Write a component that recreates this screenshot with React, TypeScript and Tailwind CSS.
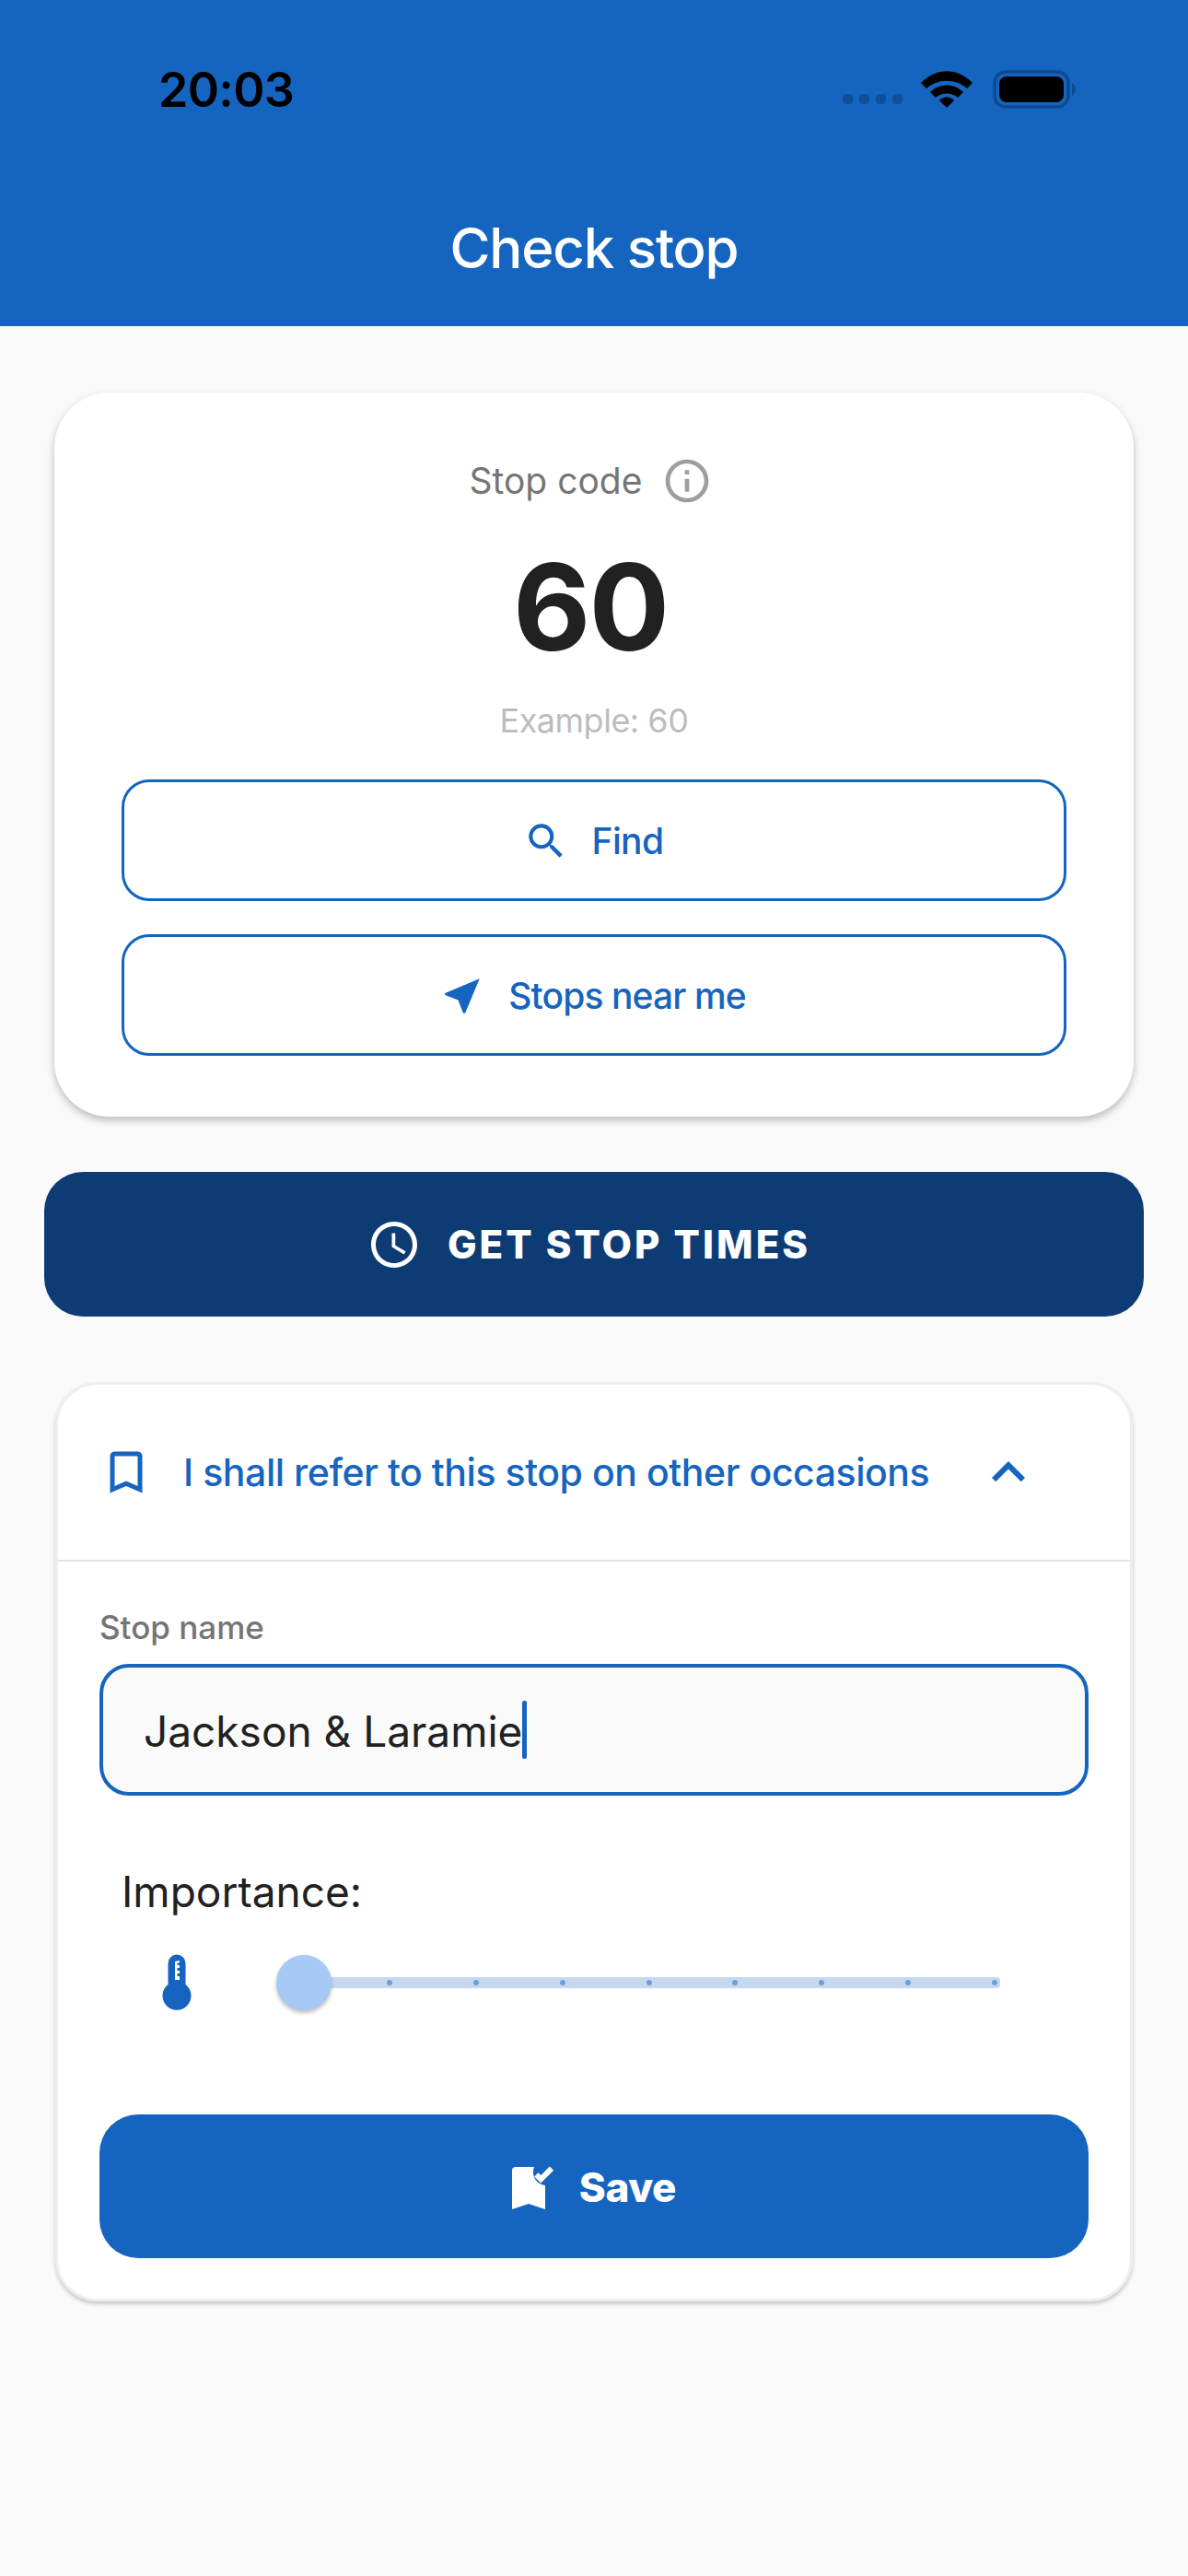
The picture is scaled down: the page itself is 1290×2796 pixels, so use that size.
import { MdSearch, MdNearMe, MdInfoOutline, MdAccessTime, MdBookmarkBorder, MdExpandLess } from "react-icons/md";

const font = { fontFamily: "Inter, 'Noto Sans', sans-serif" };

function Wifi() {
  return (
    <svg width="56" height="40" viewBox="0 0 56 40" className="block">
      <path d="M0 13 L6 19 C18 8 38 8 50 19 L56 13 C40 -4 16 -4 0 13 Z" fill="#000" />
      <path d="M10 23 L16 29 C22 23 34 23 40 29 L46 23 C36 13 20 13 10 23 Z" fill="#000" />
      <path d="M20 32 L28 40 L36 32 C31 27 25 27 20 32 Z" fill="#000" />
    </svg>
  );
}

function Battery() {
  return (
    <svg width="92" height="42" viewBox="0 0 92 42" className="block">
      <rect x="2" y="2" width="80" height="38" rx="12" fill="none" stroke="#0d4a8f" strokeWidth="3.5" />
      <rect x="7" y="7" width="70" height="28" rx="8" fill="#000" />
      <path d="M86 14 C91 16 91 26 86 28 Z" fill="#0d4a8f" />
    </svg>
  );
}

function Thermo() {
  return (
    <svg width="32" height="62" viewBox="0 0 32 62" className="block">
      <path fillRule="evenodd" fill="#1565c0" d="M6.5 10 A9.5 9.5 0 0 1 25.5 10 V33 A15.5 15.5 0 1 1 6.5 33 Z M14 8 V28 H19 V24 H16.5 V21 H19 V18 H16.5 V15 H19 V12 H16.5 V10 L19 9 V7 Z" />
    </svg>
  );
}

function SaveIcon() {
  return (
    <svg width="46" height="48" viewBox="0 0 46 48" className="block">
      <path fill="#fff" d="M4 2 H24 A14.5 14.5 0 0 0 36 22 V48 L18 42 L0 48 V6 A4 4 0 0 1 4 2 Z" />
      <path fill="none" stroke="#fff" strokeWidth="6" d="M26.3 10.3 L31.3 15.3 L43 3.7" />
    </svg>
  );
}

export default function App() {
  const ticks = [0, 1, 2, 3, 4, 5, 6, 7];
  return (
    <div style={font} className="min-h-[2796px] w-[1290px] bg-[#fafafa] flex flex-col">
      <header className="h-[354px] bg-[#1565c0] flex flex-col">
        <div className="h-[233px] pt-[70px] pl-[172px] pr-[120px] flex items-start justify-between">
          <span className="text-[52px] leading-[56px] font-semibold text-black tracking-[-0.7px]">20:03</span>
          <div className="flex items-center pt-[6px]">
            <div className="flex gap-[7px] mt-[20px] mr-[20px]">
              <span className="w-[11px] h-[11px] rounded-[4px] bg-[#0f4f9a]" />
              <span className="w-[11px] h-[11px] rounded-[4px] bg-[#0f4f9a]" />
              <span className="w-[11px] h-[11px] rounded-[4px] bg-[#0f4f9a]" />
              <span className="w-[11px] h-[11px] rounded-[4px] bg-[#0f4f9a]" />
            </div>
            <Wifi />
            <div className="ml-[22px]"><Battery /></div>
          </div>
        </div>
        <h1 className="text-center text-[60px] leading-[72px] font-medium text-white m-0 tracking-[-1.2px]">Check stop</h1>
      </header>

      <main className="px-[48px] pt-[72px] flex flex-col">
        <section className="mx-[11px] h-[786px] bg-white rounded-[60px] shadow-[0_4px_8px_rgba(0,0,0,0.25)] px-[73px] pt-[66px] flex flex-col">
          <div className="flex items-center justify-center h-[60px] pr-[6px]">
            <span className="text-[39px] leading-[60px] text-[#757575]">Stop code</span>
            <MdInfoOutline size={56} color="#9e9e9e" className="ml-[21px]" />
          </div>
          <div className="text-center text-[130px] leading-[150px] font-bold text-[#212121] mt-[32px] mr-[8px] tracking-[-2px]">60</div>
          <div className="text-center text-[36px] leading-[44px] text-[#bdbdbd] mt-[26px] tracking-[-0.5px]">Example: 60</div>
          <button className="mt-[42px] h-[132px] border-[3px] border-[#1565c0] rounded-[30px] flex items-center justify-center gap-[25px] pr-[2px] pt-[2px] text-[39px] font-[550] text-[#1565c0] tracking-[-0.6px]">
            <MdSearch size={50} />
            Find
          </button>
          <button className="mt-[36px] h-[132px] border-[3px] border-[#1565c0] rounded-[30px] flex items-center justify-center gap-[25px] pr-[3px] pt-[2px] text-[39px] font-[550] text-[#1565c0] tracking-[-0.9px]">
            <MdNearMe size={50} />
            Stops near me
          </button>
        </section>

        <button className="mt-[60px] h-[157px] bg-[#0d3c75] rounded-[42px] flex items-center justify-center gap-[28px] pr-[12px] text-[42px] font-extrabold tracking-[3px] text-white">
          <MdAccessTime size={60} />
          GET STOP TIMES
        </button>

        <section className="mt-[71px] mx-[12px] h-[998px] bg-white rounded-[46px] border-[3px] border-[#eeeeee] shadow-[0_3px_4px_rgba(0,0,0,0.2)] flex flex-col">
          <div className="h-[192px] border-b-2 border-[#e5e5e5] flex items-start pt-[65px] pl-[44px] text-[#1565c0]">
            <MdBookmarkBorder size={60} />
            <span className="ml-[32px] text-[41px] leading-[60px] font-medium tracking-[-0.45px]">I shall refer to this stop on other occasions</span>
            <MdExpandLess size={72} className="ml-[50px] -mt-[6px]" />
          </div>
          <div className="px-[45px] flex flex-col">
            <label className="mt-[48px] text-[35px] leading-[46px] font-medium text-[#757575]">Stop name</label>
            <div className="mt-[17px] h-[143px] border-[4px] border-[#1565c0] rounded-[32px] bg-[#fafafa] flex items-center pl-[44px] text-[46px] text-[#212121]">
              <span className="pt-[4px]">Jackson &amp; Laramie</span>
              <span className="w-[5px] h-[63px] bg-[#1565c0] rounded-[2px]" />
            </div>
            <div className="mt-[76px] pl-[24px] text-[46px] leading-[56px] text-[#212121]">Importance:</div>
            <div className="mt-[40px] h-[62px] flex items-center pl-[68px]">
              <Thermo />
              <div className="relative ml-[95px] w-[783px] h-[12px] rounded-[4px] bg-[#c6d8f0] flex items-center justify-between pl-[117px] pr-[3px]">
                <span className="absolute -left-[3px] -top-[24px] w-[60px] h-[60px] rounded-full bg-[#a6caf4] shadow-[0_3px_4px_rgba(0,0,0,0.25)]" />
                {ticks.map((t) => (
                  <span key={t} className="w-[6px] h-[6px] rounded-full bg-[#6a9fdc]" />
                ))}
              </div>
            </div>
            <button className="mt-[112px] h-[156px] bg-[#1565c0] rounded-[42px] flex items-center justify-center gap-[27px] pt-[2px] text-[44px] font-extrabold tracking-[-0.4px] text-white">
              <SaveIcon />
              Save
            </button>
          </div>
        </section>
      </main>
    </div>
  );
}
